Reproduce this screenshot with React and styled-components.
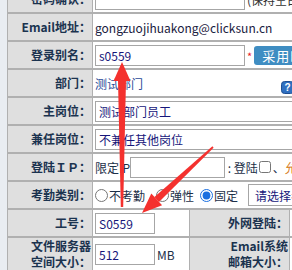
import React from "react"
import styled, { createGlobalStyle } from "styled-components"

const GlobalStyle = createGlobalStyle`
  html, body {
    margin: 0;
    padding: 0;
    background: #e9edf2;
    overflow: hidden;
  }
  body {
    font-family: "Noto Sans CJK SC", "Noto Sans", sans-serif;
    font-size: 12px;
  }
`

const Page = styled.div`
  position: relative;
  width: 292px;
  height: 270px;
  overflow: hidden;
  padding-left: 7px;
  box-sizing: border-box;
`

const FormTable = styled.table`
  border-collapse: separate;
  border-spacing: 1px 2px;
  background: #b0b0b0;
  margin-top: -16px;
  table-layout: fixed;
  width: 420px;
`

const Label = styled.td`
  background: #dfdfdf;
  color: #1b334f;
  font-weight: bold;
  text-align: right;
  padding: 0 1px 0 0;
  height: ${(p) => p.$h || 26}px;
  line-height: 16px;
  white-space: nowrap;
  vertical-align: middle;
`

const Value = styled.td`
  background: #fff;
  padding: 0 2px;
  height: 26px;
  white-space: nowrap;
  vertical-align: middle;
  color: ${(p) => p.$color || "#1a2040"};
`

const Line = styled.div`
  display: flex;
  align-items: center;
`

const TextBox = styled.input`
  box-sizing: border-box;
  width: ${(p) => p.$w}px;
  height: 21px;
  border: 1px solid #a6a6a6;
  padding: 0 3px;
  margin: 0;
  font: 12px "Noto Sans CJK SC", sans-serif;
  color: #16167a;
  background: #fff;
  outline: none;
`

const Star = styled.span`
  color: #e8182c;
  font-size: 11px;
  align-self: flex-start;
  margin: 3px 2px 0 2px;
`

const Button = styled.span`
  display: inline-flex;
  align-items: center;
  height: 19px;
  padding: 0 8px;
  background: #3f8dc2;
  color: #fff;
  border-radius: 3px;
  font-size: 13px;
  letter-spacing: 1px;
`

const Hint = styled.span`
  color: #333;
  margin-left: 2px;
`

const Help = styled.svg`
  position: absolute;
  left: 281px;
  top: 81px;
`

const Radio = styled.input`
  margin: 0 1px 0 0;
  width: 13px;
  height: 13px;
  accent-color: #1a6fe0;
`

const Check = styled.input`
  margin: 0 2px 0 1px;
  width: 12px;
  height: 12px;
`

const Option = styled.label`
  display: inline-flex;
  align-items: center;
  color: #1d3048;
  margin-right: ${(p) => p.$mr || 0}px;
`

const SelectBox = styled.span`
  display: inline-flex;
  align-items: center;
  height: 22px;
  box-sizing: border-box;
  border: 1px solid #a6a6a6;
  padding: 0 6px;
  color: #16167a;
  margin-left: 10px;
`

const Plain = styled.span`
  color: ${(p) => p.$color || "#1d3048"};
  margin-left: ${(p) => p.$ml || 0}px;
`

const Arrows = styled.svg`
  position: absolute;
  left: 0;
  top: 0;
  pointer-events: none;
`

const App = () => {
  return (
    <Page>
      <GlobalStyle />
      <FormTable>
        <colgroup>
          <col style={{ width: 84 }} />
          <col style={{ width: 96 }} />
          <col style={{ width: 99 }} />
          <col />
        </colgroup>
        <tbody>
          <tr>
            <Label>密码确认：</Label>
            <Value colSpan={3}>
              <Line>
                <TextBox $w={150} type="password" readOnly />
                <Hint>(保持空白则不修改)</Hint>
              </Line>
            </Value>
          </tr>
          <tr>
            <Label>Email地址：</Label>
            <Value colSpan={3}>gongzuojihuakong@clicksun.cn</Value>
          </tr>
          <tr>
            <Label>登录别名：</Label>
            <Value colSpan={3}>
              <Line>
                <TextBox $w={150} value="s0559" readOnly />
                <Star>*</Star>
                <Button>采用时间</Button>
              </Line>
            </Value>
          </tr>
          <tr>
            <Label>部门：</Label>
            <Value colSpan={3} $color="#2b4a98">测试部门</Value>
          </tr>
          <tr>
            <Label>主岗位：</Label>
            <Value colSpan={3}>
              <TextBox $w={260} value="测试部门员工" readOnly />
            </Value>
          </tr>
          <tr>
            <Label>兼任岗位：</Label>
            <Value colSpan={3}>
              <TextBox $w={260} value="不兼任其他岗位" readOnly />
            </Value>
          </tr>
          <tr>
            <Label>登陆ＩＰ：</Label>
            <Value colSpan={3} $color="#1d3048">
              <Line>
                <Plain>限定IP</Plain>
                <TextBox $w={95} readOnly />
                <Plain>&nbsp;:&nbsp;登陆</Plain>
                <Check type="checkbox" readOnly />
                <Plain>、</Plain>
                <Plain $color="#d8801e">允许</Plain>
              </Line>
            </Value>
          </tr>
          <tr>
            <Label>考勤类别：</Label>
            <Value colSpan={3}>
              <Line>
                <Option $mr={11}>
                  <Radio type="radio" name="kq" readOnly />不考勤
                </Option>
                <Option $mr={6}>
                  <Radio type="radio" name="kq" readOnly />弹性
                </Option>
                <Option>
                  <Radio type="radio" name="kq" defaultChecked />固定
                </Option>
                <SelectBox>请选择考勤组</SelectBox>
              </Line>
            </Value>
          </tr>
          <tr>
            <Label>工号：</Label>
            <Value>
              <TextBox $w={60} value="S0559" readOnly />
            </Value>
            <Label>外网登陆：</Label>
            <Value />
          </tr>
          <tr>
            <Label $h={32}>
              文件服务器
              <br />
              空间大小：
            </Label>
            <Value>
              <Line>
                <TextBox $w={60} value="512" readOnly />
                <Plain $ml={2}>MB</Plain>
              </Line>
            </Value>
            <Label $h={32}>
              Email系统
              <br />
              邮箱大小：
            </Label>
            <Value />
          </tr>
        </tbody>
      </FormTable>

      <Help width="13" height="13" viewBox="0 0 13 13">
        <rect x="0.5" y="0.5" width="12" height="12" rx="3" fill="#2f6fc0" stroke="#1d4e93" />
        <text x="6.5" y="10" textAnchor="middle" fontSize="10" fontWeight="bold" fill="#fff" fontFamily="Liberation Sans, sans-serif">?</text>
      </Help>

      <Arrows width="292" height="270" viewBox="0 0 292 270">
        <polygon points="120.8,207 123.2,207 126,80 118,80" fill="#f4312e" />
        <polygon points="122,62 130.5,81 113.5,81" fill="#f4312e" />
        <polygon points="213.6,147.7 212.4,146.3 154.4,196.9 159,201.9" fill="#f4312e" />
        <polygon points="142,213 162.1,205.3 151.3,193.5" fill="#f4312e" />
      </Arrows>
    </Page>
  )
}

export default App
